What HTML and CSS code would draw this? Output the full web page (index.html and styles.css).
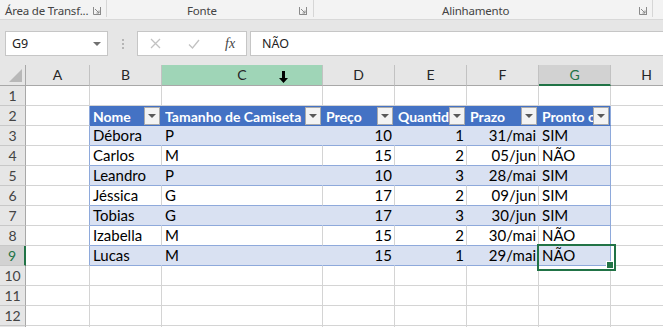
FILE: index.html
```html
<!DOCTYPE html>
<html lang="pt-BR">
<head>
    <meta charset="UTF-8">
    <meta name="viewport" content="width=device-width, initial-scale=1.0">
    <title>Pasta1 - Excel</title>
    <link rel="stylesheet" href="styles.css">
</head>
<body>
    <!-- ribbon group labels -->
    <div class="ribbon">
        <div class="group group-clip">
            <span class="group-label">Área de Transf...</span>
            <svg class="launcher" width="8" height="8" viewBox="0 0 8 8"><path d="M0.5 0v7.5H8M7.5 0v7.5" fill="none" stroke="#8a8a8a"/><path d="M2 2l4 4M6 3.5V6H3.5" fill="none" stroke="#8a8a8a"/></svg>
        </div>
        <div class="group group-font">
            <span class="group-label">Fonte</span>
            <svg class="launcher" width="8" height="8" viewBox="0 0 8 8"><path d="M0.5 0v7.5H8M7.5 0v7.5" fill="none" stroke="#8a8a8a"/><path d="M2 2l4 4M6 3.5V6H3.5" fill="none" stroke="#8a8a8a"/></svg>
        </div>
        <div class="group group-align">
            <span class="group-label">Alinhamento</span>
            <svg class="launcher" width="8" height="8" viewBox="0 0 8 8"><path d="M0.5 0v7.5H8M7.5 0v7.5" fill="none" stroke="#8a8a8a"/><path d="M2 2l4 4M6 3.5V6H3.5" fill="none" stroke="#8a8a8a"/></svg>
        </div>
    </div>

    <!-- formula bar -->
    <div class="formula-bar">
        <div class="name-box">
            <span>G9</span>
            <svg width="8" height="4" viewBox="0 0 8 4"><path d="M0 0h8L4 4z" fill="#707070"/></svg>
        </div>
        <svg class="grip" width="3" height="12" viewBox="0 0 3 12"><rect x="1" y="1" width="2" height="2" fill="#b5b5b5"/><rect x="1" y="5" width="2" height="2" fill="#b5b5b5"/><rect x="1" y="9" width="2" height="2" fill="#b5b5b5"/></svg>
        <div class="fx-box">
            <svg width="11" height="11" viewBox="0 0 11 11"><path d="M1 1l9 9M10 1l-9 9" stroke="#c2c2c2" stroke-width="1.3"/></svg>
            <svg width="12" height="10" viewBox="0 0 12 10"><path d="M1 5.5l3.5 3.5L11 1" fill="none" stroke="#c2c2c2" stroke-width="1.3"/></svg>
            <span class="fx">fx</span>
        </div>
        <div class="formula-input">NÃO</div>
    </div>

    <!-- worksheet -->
    <div class="sheet">
        <div class="hd corner"><svg width="13" height="13" viewBox="0 0 13 13"><path d="M13 0v13H0z" fill="#b8b8b8"/></svg></div>
        <div class="hd">A</div>
        <div class="hd">B</div>
        <div class="hd hd-hover">C<svg class="cursor" width="9" height="12" viewBox="0 0 9 12"><path d="M3 0h3v7h3L4.5 12 0 7h3z" fill="#000"/></svg></div>
        <div class="hd">D</div>
        <div class="hd">E</div>
        <div class="hd">F</div>
        <div class="hd hd-sel">G</div>
        <div class="hd">H</div>

        <div class="rh">1</div>
        <div class="c"></div><div class="c"></div><div class="c"></div><div class="c"></div><div class="c"></div><div class="c"></div><div class="c"></div><div class="c"></div>

        <div class="rh">2</div>
        <div class="c tl"></div>
        <div class="c th"><span class="th-text">Nome</span><span class="filter"></span></div>
        <div class="c th"><span class="th-text">Tamanho de Camiseta</span><span class="filter"></span></div>
        <div class="c th"><span class="th-text">Preço</span><span class="filter"></span></div>
        <div class="c th"><span class="th-text">Quantidade</span><span class="filter"></span></div>
        <div class="c th"><span class="th-text">Prazo</span><span class="filter"></span></div>
        <div class="c th tr"><span class="th-text">Pronto ou não?</span><span class="filter"></span></div>
        <div class="c"></div>

        <div class="rh">3</div>
        <div class="c tl"></div>
        <div class="c band">Débora</div><div class="c band">P</div><div class="c band num">10</div><div class="c band num">1</div><div class="c band num">31/mai</div><div class="c band tr">SIM</div>
        <div class="c"></div>

        <div class="rh">4</div>
        <div class="c tl"></div>
        <div class="c tw">Carlos</div><div class="c tw">M</div><div class="c tw num">15</div><div class="c tw num">2</div><div class="c tw num">05/jun</div><div class="c tw tr">NÃO</div>
        <div class="c"></div>

        <div class="rh">5</div>
        <div class="c tl"></div>
        <div class="c band">Leandro</div><div class="c band">P</div><div class="c band num">10</div><div class="c band num">3</div><div class="c band num">28/mai</div><div class="c band tr">SIM</div>
        <div class="c"></div>

        <div class="rh">6</div>
        <div class="c tl"></div>
        <div class="c tw">Jéssica</div><div class="c tw">G</div><div class="c tw num">17</div><div class="c tw num">2</div><div class="c tw num">09/jun</div><div class="c tw tr">SIM</div>
        <div class="c"></div>

        <div class="rh">7</div>
        <div class="c tl"></div>
        <div class="c band">Tobias</div><div class="c band">G</div><div class="c band num">17</div><div class="c band num">3</div><div class="c band num">30/jun</div><div class="c band tr">SIM</div>
        <div class="c"></div>

        <div class="rh">8</div>
        <div class="c tl"></div>
        <div class="c tw">Izabella</div><div class="c tw">M</div><div class="c tw num">15</div><div class="c tw num">2</div><div class="c tw num">30/mai</div><div class="c tw tr">NÃO</div>
        <div class="c"></div>

        <div class="rh rh-sel">9</div>
        <div class="c tl"></div>
        <div class="c band">Lucas</div><div class="c band">M</div><div class="c band num">15</div><div class="c band num">1</div><div class="c band num">29/mai</div><div class="c band tr sel">NÃO</div>
        <div class="c"></div>

        <div class="rh">10</div>
        <div class="c"></div><div class="c"></div><div class="c"></div><div class="c"></div><div class="c"></div><div class="c"></div><div class="c"></div><div class="c"></div>

        <div class="rh">11</div>
        <div class="c"></div><div class="c"></div><div class="c"></div><div class="c"></div><div class="c"></div><div class="c"></div><div class="c"></div><div class="c"></div>

        <div class="rh">12</div>
        <div class="c"></div><div class="c"></div><div class="c"></div><div class="c"></div><div class="c"></div><div class="c"></div><div class="c"></div><div class="c"></div>

        <div class="rh"></div>
        <div class="c"></div><div class="c"></div><div class="c"></div><div class="c"></div><div class="c"></div><div class="c"></div><div class="c"></div><div class="c"></div>
    </div>
</body>
</html>
```

FILE: styles.css
```css
* { box-sizing: border-box; }
body {
    margin: 0;
    width: 663px;
    height: 327px;
    overflow: hidden;
    background: #e6e6e6;
    font-family: 'Noto Sans', sans-serif;
}

/* ribbon */
.ribbon {
    display: flex;
    height: 20px;
    background: #f3f3f3;
    border-bottom: 1px solid #d8d8d8;
}
.group {
    display: flex;
    align-items: center;
    height: 17px;
    border-right: 1px solid #d6d6d6;
}
.group-label {
    font-size: 11.5px;
    color: #444;
    letter-spacing: -0.2px;
    line-height: 17px;
    padding-top: 3px;
}
.launcher { margin-left: auto; margin-top: 4px; }
.group-clip { width: 107px; padding-left: 5px; padding-right: 5px; }
.group-font { width: 207px; padding-left: 80px; padding-right: 6px; }
.group-align { width: 339px; padding-left: 128px; padding-right: 5px; }

/* formula bar */
.formula-bar {
    display: flex;
    align-items: center;
    height: 45px;
    padding: 11px 0 9px 5px;
}
.name-box, .fx-box, .formula-input {
    height: 25px;
    background: #fff;
    border: 1px solid #c6c6c6;
    display: flex;
    align-items: center;
}
.name-box {
    width: 103px;
    justify-content: space-between;
    padding: 0 6px 0 6px;
    font-size: 12.5px;
    color: #222;
}
.grip { margin: 0 13px; }
.fx-box {
    width: 110px;
    padding-left: 12px;
    gap: 27px;
}
.fx {
    font-family: 'Liberation Serif', serif;
    font-style: italic;
    font-size: 14px;
    color: #444;
    margin-left: -2px;
}
.formula-input {
    flex: 1;
    margin-left: 3px;
    margin-right: -2px;
    padding-left: 11px;
    font-size: 12.5px;
    color: #222;
}

/* worksheet grid */
.sheet {
    display: grid;
    grid-template-columns: 26px 64px 72px 161px 72px 72px 72px 72px 72px;
    grid-template-rows: 21px;
    grid-auto-rows: 20px;
    height: 262px;
    overflow: hidden;
    background: #fff;
    font-family: Lato, sans-serif;
}
.c {
    border-right: 1px solid #d4d4d4;
    border-bottom: 1px solid #d4d4d4;
    padding: 0 2px 0 3px;
    font-size: 15px;
    line-height: 19px;
    color: #000;
    white-space: nowrap;
    overflow: hidden;
}
.hd {
    background: #e6e6e6;
    border-right: 1px solid #c2c2c2;
    border-bottom: 1px solid #a8a8a8;
    text-align: center;
    font-size: 14px;
    line-height: 20px;
    color: #262626;
}
.corner {
    display: flex;
    align-items: flex-end;
    justify-content: flex-end;
    padding: 0 3px 3px 0;
    border-right-color: #a8a8a8;
}
.hd-hover {
    position: relative;
    background: #9fd5b7;
}
.cursor { position: absolute; left: 117px; top: 6px; }
.hd-sel {
    background: #d2d2d2;
    border-bottom: 2px solid #217346;
    color: #217346;
}
.rh {
    background: #e6e6e6;
    border-right: 1px solid #a8a8a8;
    border-bottom: 1px solid #c8c8c8;
    text-align: center;
    font-size: 14px;
    line-height: 19px;
    color: #444;
}
.rh-sel {
    background: #d2d2d2;
    border-right: 2px solid #217346;
    color: #217346;
}

/* table */
.tl { border-right-color: #8ea9db; }
.th {
    display: flex;
    align-items: center;
    padding-right: 1px;
    background: #4472c4;
    border-right-color: #4472c4;
    border-bottom-color: #4472c4;
    color: #fff;
    font-weight: bold;
    font-size: 14px;
}
.th-text { flex: 1; min-width: 0; overflow: hidden; padding-top: 1px; }
.filter {
    position: relative;
    flex: none;
    width: 16px;
    height: 18px;
    background: #f3f3f3;
    border: 1px solid #ababab;
}
.filter::after {
    content: '';
    position: absolute;
    left: 3px;
    top: 6px;
    border-left: 4px solid transparent;
    border-right: 4px solid transparent;
    border-top: 4px solid #595959;
}
.band {
    background: #d9e1f2;
    border-right-color: #d9e1f2;
    border-bottom-color: #8ea9db;
}
.tw { border-bottom-color: #8ea9db; }
.tr { border-right-color: #8ea9db; }
.num { text-align: right; }
.sel { position: relative; overflow: visible; }
.sel::before {
    content: '';
    position: absolute;
    left: -2px;
    top: -2px;
    width: 75px;
    height: 23px;
    border: 2px solid #217346;
    z-index: 2;
}
.sel::after {
    content: '';
    position: absolute;
    right: -4px;
    bottom: -4px;
    width: 6px;
    height: 6px;
    background: #217346;
    border: 1px solid #fff;
    z-index: 3;
}
```
